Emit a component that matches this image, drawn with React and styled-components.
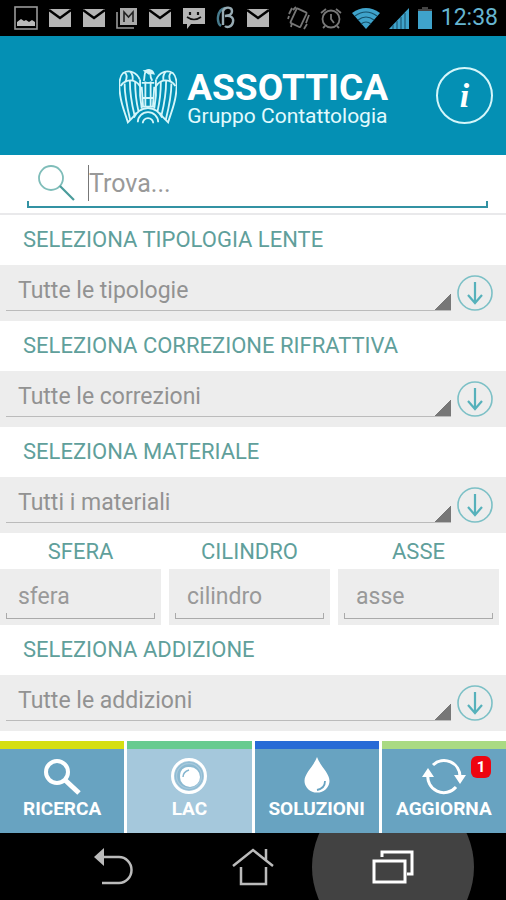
import React from 'react'
import styled, { createGlobalStyle } from 'styled-components'

const filters = [
    { id: 'tipologia', title: 'Seleziona tipologia lente', value: 'Tutte le tipologie' },
    { id: 'correzione', title: 'Seleziona correzione rifrattiva', value: 'Tutte le correzioni' },
    { id: 'materiale', title: 'Seleziona materiale', value: 'Tutti i materiali' },
]

const addition = { id: 'addizione', title: 'Seleziona addizione', value: 'Tutte le addizioni' }

const measures = ['sfera', 'cilindro', 'asse']

const MailIcon = () => (
    <svg width="24" height="20" viewBox="0 0 24 20">
        <rect x="1" y="1" width="22" height="18" fill="#b5b5b5" />
        <path d="M1 2l11 8 11-8" fill="none" stroke="#000" strokeWidth="2.4" />
    </svg>
)

const PictureIcon = () => (
    <svg width="24" height="26" viewBox="0 0 24 26">
        <rect x="1" y="2" width="22" height="22" fill="none" stroke="#999" strokeWidth="1.6" />
        <path d="M3 21v-4l4-3 3 2 2-1 3 2 3-2 3 2v4z" fill="#bbb" />
    </svg>
)

const GmailIcon = () => (
    <svg width="22" height="22" viewBox="0 0 22 22">
        <path d="M1 5v16h17" fill="none" stroke="#999" strokeWidth="1.6" />
        <rect x="4" y="1" width="17" height="17" fill="#aaa" />
        <path d="M8 15V5l4.500 5L17 5v10" fill="none" stroke="#222" strokeWidth="1.600" />
    </svg>
)

const MessageIcon = () => (
    <svg width="24" height="22" viewBox="0 0 24 22">
        <path d="M1 1h22v16H9l-4 5v-5H1z" fill="#b5b5b5" />
        <path d="M8 5v3M16 5v3" stroke="#111" strokeWidth="2.2" />
        <path d="M5 10q7 5 14 0" fill="none" stroke="#111" strokeWidth="1.6" />
    </svg>
)

const BetaIcon = () => (
    <svg width="20" height="24" viewBox="0 0 20 24" fill="none">
        <path d="M9 2C1 4 0 16 5 20" stroke="#477b8d" strokeWidth="2.4" />
        <path d="M7 19V5c2-5 9-4 9 0 0 4-4 5-7 5 6-1 9 2 8 6-1 5-6 6-8 4" stroke="#98abb3" strokeWidth="2.400" />
    </svg>
)

const VibrateIcon = () => (
    <svg width="24" height="26" viewBox="0 0 24 26" fill="none" stroke="#777" strokeWidth="1.800">
        <rect x="6" y="5" width="11" height="16" rx="1" transform="rotate(25 12 13)" />
        <path d="M5 3L2 9M9 2L6 5M2 11l-1 3M22 10l-3 8M20 19l-3 5M5 18l-1 4" />
    </svg>
)

const AlarmIcon = () => (
    <svg width="24" height="24" viewBox="0 0 24 24" fill="none" stroke="#777" strokeWidth="1.8">
        <circle cx="12" cy="13" r="8.500" />
        <path d="M12 8v5l3 4M2 7l5-4M22 7l-5-4M6 20l-2 2M18 20l2 2" />
    </svg>
)

const WifiIcon = () => (
    <svg width="30" height="24" viewBox="0 0 30 24">
        <path d="M1 7Q15-3 29 7L15 23z" fill="#3fa3cb" />
        <path d="M4 10q11-8 22 0M7 14q8-6 16 0M10 18q5-4 10 0" fill="none" stroke="#16506a" strokeWidth="1.200" />
    </svg>
)

const SignalIcon = () => (
    <svg width="20" height="22" viewBox="0 0 20 22">
        <path d="M0 22L20 1v21z" fill="#3fa3cb" />
        <path d="M4 22V18M8 22V14M12 22V10M16 22V6" stroke="#1d5c78" strokeWidth="1.200" />
    </svg>
)

const BatteryIcon = () => (
    <svg width="16" height="24" viewBox="0 0 16 24">
        <path d="M5 1h6v2h4v3H1V3h4z" fill="#444" />
        <rect x="1" y="5" width="14" height="18" fill="#3fa3cb" />
    </svg>
)

const Wing = () => (
    <>
        <path d="M92 62C84 42 60 30 42 42C27 56 29 88 33 112C37 140 46 160 56 192L70 178L82 163" />
        <path d="M34 82C42 66 62 60 78 68C86 72 90 78 94 84" />
        <path d="M46 74C46 110 52 140 63 184M62 66C62 105 68 138 76 170M78 68C78 100 82 132 88 158M93 62V110L98 150" />
        <path d="M46 41C54 46 54 56 48 70M64 38C70 46 72 56 70 66" />
    </>
)

const EagleLogo = () => (
    <svg width="58" height="56" viewBox="29 28 176 168" fill="none" stroke="#d5f6fa" strokeWidth="5.500">
        <Wing />
        <g transform="translate(234 0) scale(-1 1)"><Wing /></g>
        <path d="M104 66C108 58 104 46 110 38C116 30 130 32 134 44L124 42C124 52 126 60 130 66" />
        <path d="M108 36l12-2 8 6-8 4z" fill="#d5f6fa" />
        <path d="M98 72h38M98 118h38M98 144h38M109 68v76M125 68v76M98 84l4 60M136 84l-4 60" />
        <path d="M101 195a16 16 0 0 1 32 0M86 192a31 31 0 0 1 62 0M74 178a46 46 0 0 1 86 0" />
    </svg>
)

const SearchIcon = () => (
    <svg width="38" height="38" viewBox="0 0 38 38" fill="none">
        <circle cx="13" cy="13" r="12" stroke="#7fbdb9" strokeWidth="1.800" />
        <path d="M22 21l14 14" stroke="#4a9c9b" strokeWidth="2.200" />
    </svg>
)

const ArrowIcon = () => (
    <svg width="36" height="36" viewBox="0 0 36 36" fill="none">
        <circle cx="18" cy="18" r="17" stroke="#7cc0c6" strokeWidth="1.600" />
        <path d="M18 7v20M11 20l7 8 7-8" stroke="#56b1bb" strokeWidth="2.200" />
    </svg>
)

const RicercaIcon = () => (
    <svg width="40" height="40" viewBox="0 0 40 40" fill="none" stroke="#fff">
        <circle cx="15" cy="15" r="11" strokeWidth="4" />
        <path d="M23 23l14 13" strokeWidth="5" />
    </svg>
)

const LacIcon = () => (
    <svg width="40" height="40" viewBox="0 0 40 40" fill="none">
        <circle cx="20" cy="19" r="14" fill="#8bb9d1" />
        <circle cx="20" cy="19" r="16.500" stroke="#fff" strokeWidth="3" />
        <circle cx="20" cy="19" r="12.500" stroke="#a5c8dc" strokeWidth="1.500" />
        <circle cx="21" cy="20" r="10" fill="#fff" />
        <path d="M12 19c0-5 3-8 8-8" stroke="#fff" strokeWidth="1.800" />
        <path d="M14 20c0-4 3-6 6-7" stroke="#84b5cf" strokeWidth="1.500" />
    </svg>
)

const SoluzioniIcon = () => (
    <svg width="40" height="40" viewBox="0 0 40 40" fill="none">
        <path d="M20 0c3 9 12.500 16 12.500 24a12.500 11.500 0 0 1-25 0C7.500 16 17 9 20 0z" fill="#fff" />
        <path d="M28 24c0 5-3 8-8 9" stroke="#68a3c1" strokeWidth="1.800" />
    </svg>
)

const AggiornaIcon = () => (
    <svg width="44" height="40" viewBox="0 0 44 40" fill="none" stroke="#fff" strokeWidth="3">
        <path d="M11 8A16 16 0 0 1 38 20M34 30A16 16 0 0 1 6 17" />
        <path d="M32 18h12l-6 9zM0 20h12l-6-9z" fill="#fff" stroke="none" />
    </svg>
)

const BackIcon = () => (
    <svg width="40" height="38" viewBox="0 0 40 38" fill="none">
        <path d="M10 9h16a12.500 13 0 0 1 0 26H9" stroke="#bbb" strokeWidth="2.500" />
        <path d="M1 9l10-9v18z" fill="#bbb" />
    </svg>
)

const HomeIcon = () => (
    <svg width="42" height="38" viewBox="0 0 42 38" fill="none" stroke="#bbb" strokeWidth="2.500">
        <path d="M1 18L21 2l20 16M34 12V1M9 19v17h25V19" />
    </svg>
)

const RecentIcon = () => (
    <svg width="42" height="36" viewBox="0 0 42 36" fill="none" stroke="#fff" strokeWidth="3">
        <path d="M10 8V3h30v22h-5" />
        <rect x="2" y="12" width="31" height="21" />
    </svg>
)

const tabs = [
    { label: 'RICERCA', accent: '#d6df12', Icon: RicercaIcon },
    { label: 'LAC', accent: '#68cb90', Icon: LacIcon, active: true },
    { label: 'SOLUZIONI', accent: '#276bd6', Icon: SoluzioniIcon },
    { label: 'AGGIORNA', accent: '#aada83', Icon: AggiornaIcon, badge: 1 },
]

const FilterSelect = ({ filter }) => (
    <section>
        <StyledHeading htmlFor={filter.id}>{filter.title}</StyledHeading>
        <StyledSelectRow>
            <select id={filter.id}>
                <option>{filter.value}</option>
            </select>
            <button type="button" aria-label={filter.value}>
                <ArrowIcon />
            </button>
        </StyledSelectRow>
    </section>
)

const App = () => {
    return (
        <StyledPage>
            <GlobalStyle />
            <StyledStatusBar>
                <StyledStatusGroup $gap="10px">
                    <PictureIcon />
                    <MailIcon />
                    <MailIcon />
                    <GmailIcon />
                    <MailIcon />
                    <MessageIcon />
                    <BetaIcon />
                    <MailIcon />
                </StyledStatusGroup>
                <StyledStatusGroup $gap="8px">
                    <VibrateIcon />
                    <AlarmIcon />
                    <WifiIcon />
                    <SignalIcon />
                    <BatteryIcon />
                    <time>12:38</time>
                </StyledStatusGroup>
            </StyledStatusBar>

            <StyledHeader>
                <StyledBrand>
                    <EagleLogo />
                    <div>
                        <h1>ASSOTTICA</h1>
                        <p>Gruppo Contattologia</p>
                    </div>
                </StyledBrand>
                <StyledInfo type="button">i</StyledInfo>
            </StyledHeader>

            <StyledSearch>
                <StyledSearchBox>
                    <SearchIcon />
                    <input type="text" placeholder="Trova..." aria-label="Trova" />
                </StyledSearchBox>
            </StyledSearch>

            <main>
                {filters.map((filter) => (
                    <FilterSelect key={filter.id} filter={filter} />
                ))}
                <StyledMeasures>
                    {measures.map((name) => (
                        <StyledMeasure key={name}>
                            <span>{name}</span>
                            <div>
                                <input type="text" placeholder={name} />
                            </div>
                        </StyledMeasure>
                    ))}
                </StyledMeasures>
                <FilterSelect filter={addition} />
            </main>

            <StyledTabs>
                {tabs.map(({ label, accent, Icon, active, badge }) => (
                    <StyledTab key={label} type="button" $accent={accent} $active={active}>
                        <Icon />
                        <span>{label}</span>
                        {badge && <StyledBadge>{badge}</StyledBadge>}
                    </StyledTab>
                ))}
            </StyledTabs>

            <StyledNav>
                <StyledNavButton type="button" aria-label="Indietro"><BackIcon /></StyledNavButton>
                <StyledNavButton type="button" aria-label="Home"><HomeIcon /></StyledNavButton>
                <StyledNavButton type="button" aria-label="Recenti" $pressed><RecentIcon /></StyledNavButton>
            </StyledNav>
        </StyledPage>
    )
}

const GlobalStyle = createGlobalStyle`
    * {
        box-sizing: border-box;
    }

    body {
        margin: 0;
        background: #fff;
        font-family: Roboto, 'Liberation Sans', sans-serif;
    }

    button, input, select {
        font-family: inherit;
        margin: 0;
        padding: 0;
        border: 0;
        border-radius: 0;
        background: none;
        outline: none;
    }

    svg {
        display: block;
        flex-shrink: 0;
    }
`

const StyledPage = styled.div`
    display: flex;
    flex-direction: column;
    min-height: 100vh;
`

const StyledStatusBar = styled.div`
    display: flex;
    justify-content: space-between;
    align-items: center;
    height: 36px;
    padding: 0 8px 0 14px;
    background: #000;
`

const StyledStatusGroup = styled.div`
    display: flex;
    align-items: center;
    gap: ${({ $gap }) => $gap};

    time {
        font-size: 23px;
        line-height: 24px;
        color: #66b5d0;
    }
`

const StyledHeader = styled.header`
    display: flex;
    justify-content: flex-end;
    align-items: center;
    gap: 48px;
    padding: 31px 13px;
    background: #0490b4;
`

const StyledBrand = styled.div`
    display: flex;
    align-items: flex-start;
    gap: 10px;
    color: #fff;

    h1 {
        margin: 0;
        font-size: 37px;
        line-height: 40px;
        font-weight: 700;
    }

    p {
        margin: 0;
        font-size: 21px;
        line-height: 16px;
        color: #e2fafd;
    }
`

const StyledInfo = styled.button`
    width: 57px;
    height: 57px;
    border: 2px solid #d5f6fa;
    border-radius: 50%;
    color: #fff;
    font-family: 'Liberation Serif', serif;
    font-size: 34px;
    font-style: italic;
    font-weight: 700;
    line-height: 48px;
`

const StyledSearch = styled.div`
    padding: 8px 18px 5px 27px;
    border-bottom: 2px solid #e9e9eb;
`

const underline = (color, thickness, tick) => `
    background:
        linear-gradient(${color}, ${color}) left bottom / ${thickness} ${tick} no-repeat,
        linear-gradient(${color}, ${color}) right bottom / ${thickness} ${tick} no-repeat,
        linear-gradient(${color}, ${color}) left bottom / 100% ${thickness} no-repeat;
`

const StyledSearchBox = styled.div`
    display: flex;
    align-items: flex-start;
    gap: 12px;
    padding: 2px 11px 5px;
    ${underline('#3292a3', '2px', '7px')}

    input {
        flex: 1;
        min-width: 0;
        height: 36px;
        border-left: 1px solid #777;
        font-size: 25px;
        color: #888;
    }

    input::placeholder {
        color: #999;
    }
`

const StyledHeading = styled.label`
    display: block;
    padding: 13px 23px;
    font-size: 22px;
    line-height: 24px;
    text-transform: uppercase;
    color: #609f9b;
`

const StyledSelectRow = styled.div`
    display: flex;
    align-items: center;
    gap: 6px;
    padding: 6px 13px 10px 6px;
    background: #ededed;

    select {
        flex: 1;
        min-width: 0;
        height: 40px;
        padding: 0 16px 0 12px;
        appearance: none;
        border-bottom: 1px solid #bbb;
        background: linear-gradient(135deg, transparent 50%, #777 50%) right bottom / 16px 16px no-repeat;
        font-size: 23px;
        color: #929292;
    }

    button {
        margin-top: 4px;
    }
`

const StyledMeasures = styled.div`
    display: grid;
    grid-template-columns: repeat(3, 1fr);
    gap: 8px;
    padding-right: 7px;
`

const StyledMeasure = styled.label`
    text-align: center;

    span {
        display: block;
        padding: 7px 0 5px;
        font-size: 22px;
        line-height: 24px;
        text-transform: uppercase;
        color: #609f9b;
    }

    div {
        padding: 6px;
        background: #ededed;
    }

    input {
        display: block;
        width: 100%;
        height: 44px;
        padding: 0 12px 2px;
        font-size: 23px;
        color: #929292;
        ${underline('#aaa', '1px', '6px')}
    }

    input::placeholder {
        color: #999;
    }
`

const StyledTabs = styled.div`
    display: grid;
    grid-template-columns: repeat(4, 1fr);
    gap: 3px;
    margin-top: 10px;
`

const StyledTab = styled.button`
    position: relative;
    display: flex;
    flex-direction: column;
    align-items: center;
    padding: 8px 0 12px;
    border-top: 8px solid ${({ $accent }) => $accent};
    background: ${({ $active }) => ($active ? '#a5c8dc' : '#68a3c1')};
    color: #fff;

    span {
        font-size: 19px;
        line-height: 24px;
        font-weight: 700;
    }
`

const StyledBadge = styled.b`
    position: absolute;
    top: 7px;
    right: 15px;
    width: 20px;
    border-radius: 6px;
    background: #ee0510;
    font-size: 15px;
    line-height: 22px;
`

const StyledNav = styled.nav`
    display: grid;
    grid-template-columns: repeat(3, 1fr);
    flex: 1;
    min-height: 67px;
    padding: 0 43px;
    overflow: hidden;
    background: #000;
`

const StyledNavButton = styled.button`
    position: relative;
    display: flex;
    justify-content: center;
    align-items: center;

    svg {
        position: relative;
    }

    &::before {
        content: '';
        display: ${({ $pressed }) => ($pressed ? 'block' : 'none')};
        position: absolute;
        top: 50%;
        left: 50%;
        width: 162px;
        height: 162px;
        border-radius: 50%;
        background: #424242;
        transform: translate(-50%, -50%);
    }
`

export default App
